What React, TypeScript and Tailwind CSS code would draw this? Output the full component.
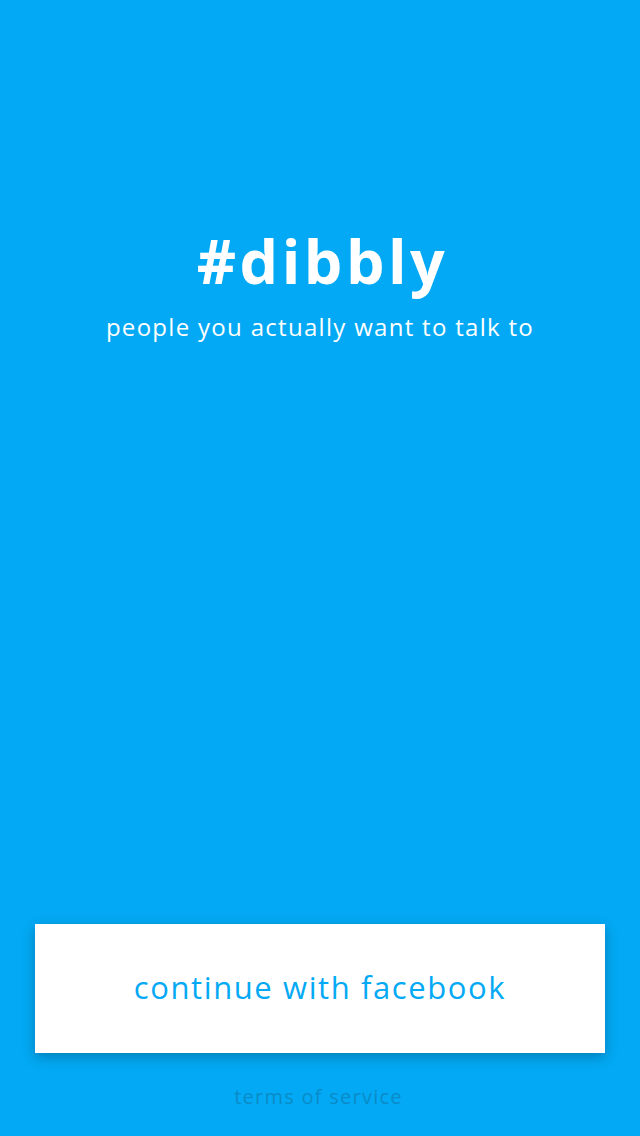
export default function App() {
  return (
    <div
      className="w-[640px] h-[1136px] bg-[#03a9f4] flex flex-col items-center"
      style={{ fontFamily: "'Open Sans', sans-serif" }}
    >
      <div className="pt-[221px] flex flex-col items-center">
        <h1 className="pl-[5px] text-white font-bold text-[61px] leading-[80px] tracking-[3.5px]">#dibbly</h1>
        <p className="mt-[11px] text-white text-[24px] leading-[30px] tracking-[1.3px]">people you actually want to talk to</p>
      </div>
      <div className="flex-1" />
      <button className="w-[570px] h-[129px] bg-white text-[#03a9f4] text-[31px] leading-[40px] pb-[4px] tracking-[1.6px] shadow-[0_4px_12px_rgba(0,0,0,0.25)]">
        continue with facebook
      </button>
      <div className="mt-[32px] mb-[27px] pr-[3px] text-[20px] leading-[24px] text-[#0a8bc8] tracking-[1.25px]">terms of service</div>
    </div>
  );
}
